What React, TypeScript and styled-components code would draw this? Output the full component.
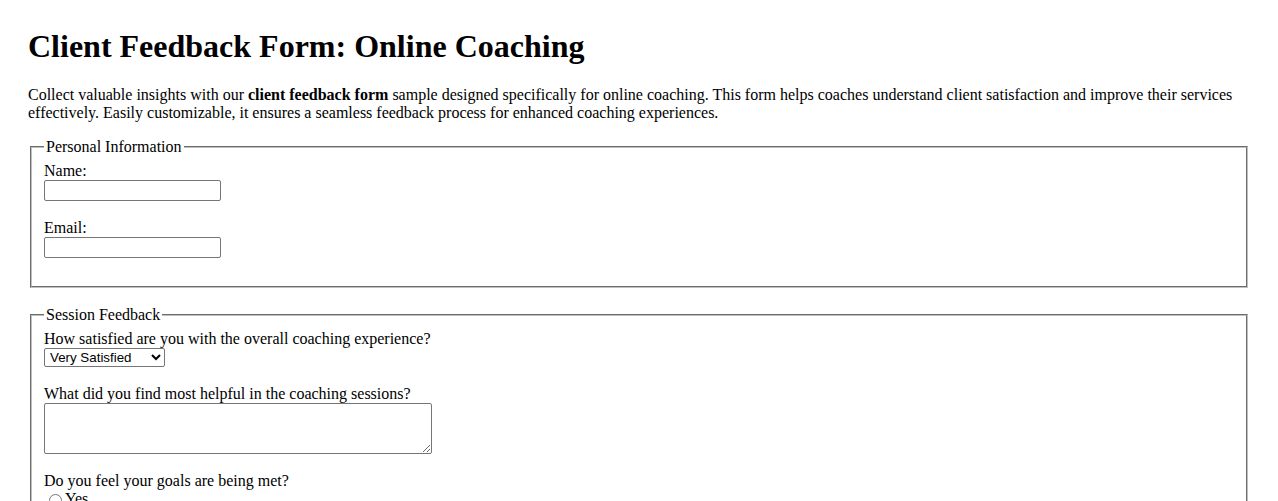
import styled, { createGlobalStyle } from 'styled-components';

const GlobalStyle = createGlobalStyle`
  html {
    overflow: hidden;
  }

  body {
    margin: 8px;
    font-family: 'Liberation Serif', 'Times New Roman', serif;
    font-size: 16px;
    color: #000000;
    background-color: #ffffff;
  }
`;

const Page = styled.main`
  padding: 20px;
`;

const Title = styled.h1`
  margin: 0 0 21.44px;
  font-size: 32px;
  font-weight: bold;
`;

const Intro = styled.p`
  margin: 0 0 16px;
`;

const Section = styled.fieldset`
  margin: 0 2px 18px;
  padding: 5.6px 12px 10px;
  border: 2px groove rgb(192, 192, 192);
`;

const Legend = styled.legend`
  padding: 0 2px;
`;

const Field = styled.div`
  margin-bottom: 18px;
`;

const Label = styled.label`
  display: block;
`;

const TextInput = styled.input`
  display: block;
  box-sizing: border-box;
  width: 177px;
  height: 21px;
  margin: 0;
  padding: 1px 2px;
  border: 1px solid #767676;
  border-radius: 2px;
  font-family: 'Liberation Sans', Arial, sans-serif;
  font-size: 13.33px;
`;

const Select = styled.select`
  display: block;
  box-sizing: border-box;
  width: 121px;
  height: 19px;
  margin: 0;
  padding: 0 0 0 1px;
  border: 1px solid #767676;
  border-radius: 2px;
  font-family: 'Liberation Sans', Arial, sans-serif;
  font-size: 13.33px;
  color: #000000;
  background-color: #ffffff;
`;

const TextArea = styled.textarea`
  display: block;
  box-sizing: border-box;
  width: 388px;
  height: 51px;
  margin: 0;
  padding: 2px;
  border: 1px solid #767676;
  border-radius: 2px;
  font-family: 'Liberation Mono', 'Courier New', monospace;
  font-size: 13.33px;
`;

const Option = styled.label`
  display: flex;
  align-items: center;
  height: 18.4px;
`;

const Radio = styled.input`
  width: 13px;
  height: 13px;
  margin: 3px 3px 0 5px;
`;

const satisfaction = ['Very Satisfied', 'Satisfied', 'Neutral', 'Dissatisfied', 'Very Dissatisfied'];
const goals = ['Yes', 'No', 'Partially'];

export default function App () {
  return (
    <>
      <GlobalStyle />
      <Page>
        <Title>Client Feedback Form: Online Coaching</Title>
        <Intro>
          Collect valuable insights with our <strong>client feedback form</strong> sample designed
          specifically for online coaching. This form helps coaches understand client satisfaction
          and improve their services effectively. Easily customizable, it ensures a seamless
          feedback process for enhanced coaching experiences.
        </Intro>
        <form>
          <Section>
            <Legend>Personal Information</Legend>
            <Field>
              <Label htmlFor='name'>Name:</Label>
              <TextInput id='name' type='text' name='name' />
            </Field>
            <Field>
              <Label htmlFor='email'>Email:</Label>
              <TextInput id='email' type='email' name='email' />
            </Field>
          </Section>

          <Section>
            <Legend>Session Feedback</Legend>
            <Field>
              <Label htmlFor='satisfaction'>How satisfied are you with the overall coaching experience?</Label>
              <Select id='satisfaction' name='satisfaction' defaultValue='Very Satisfied'>
                {satisfaction.map(item => (
                  <option key={item} value={item}>{item}</option>
                ))}
              </Select>
            </Field>
            <Field>
              <Label htmlFor='helpful'>What did you find most helpful in the coaching sessions?</Label>
              <TextArea id='helpful' name='helpful' rows={3} />
            </Field>
            <Field>
              <Label>Do you feel your goals are being met?</Label>
              {goals.map(item => (
                <Option key={item}>
                  <Radio type='radio' name='goals' value={item} />
                  {item}
                </Option>
              ))}
            </Field>
          </Section>
        </form>
      </Page>
    </>
  );
};
